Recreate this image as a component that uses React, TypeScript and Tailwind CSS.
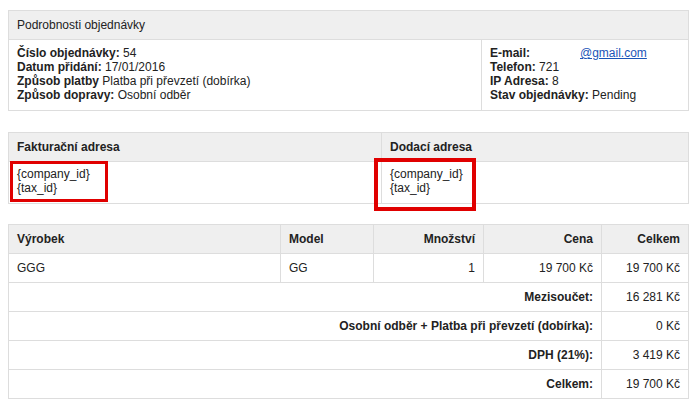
export default function App() {
  const th = "border border-[#dddddd] bg-[#efefef] px-2 h-[29px] font-bold text-[#222222] text-left";
  const td = "border border-[#dddddd] px-2 h-[29px] text-[#222222]";

  return (
    <div className="bg-white w-[699px] h-[409px] pl-[8px] pt-[10px] font-['Liberation_Sans',Arial,sans-serif] text-[12px] leading-[14px] text-[#222222]">
      {/* Order details */}
      <table className="w-[681px] table-fixed border-collapse">
        <colgroup>
          <col className="w-[473px]" />
          <col />
        </colgroup>
        <thead>
          <tr>
            <td colSpan={2} className="border border-[#dddddd] bg-[#efefef] px-2 h-[29px]">
              Podrobnosti objednávky
            </td>
          </tr>
        </thead>
        <tbody>
          <tr>
            <td className="border border-[#dddddd] px-2 pt-[6px] pb-[8px] align-top">
              <div><b>Číslo objednávky:</b> 54</div>
              <div><b>Datum přidání:</b> 17/01/2016</div>
              <div><b>Způsob platby</b> Platba při převzetí (dobírka)</div>
              <div><b>Způsob dopravy:</b> Osobní odběr</div>
            </td>
            <td className="border border-[#dddddd] px-2 pt-[6px] pb-[8px] align-top">
              <div className="flex">
                <b className="w-[90px]">E-mail:</b>
                <span className="text-[#1a55b8] underline">@gmail.com</span>
              </div>
              <div><b>Telefon:</b> 721</div>
              <div><b>IP Adresa:</b> 8</div>
              <div><b>Stav objednávky:</b> Pending</div>
            </td>
          </tr>
        </tbody>
      </table>

      {/* Addresses */}
      <table className="mt-[21px] w-[681px] table-fixed border-collapse">
        <colgroup>
          <col className="w-[373px]" />
          <col />
        </colgroup>
        <thead>
          <tr>
            <th className={th}>Fakturační adresa</th>
            <th className={th}>Dodací adresa</th>
          </tr>
        </thead>
        <tbody>
          <tr>
            <td className="relative border border-[#dddddd] px-2 pt-[5px] h-[42px] align-top">
              <div>{"{company_id}"}</div>
              <div>{"{tax_id}"}</div>
              <div className="absolute left-[1px] top-[-1px] w-[98px] h-[41px] border-[3px] border-[#e00000]" />
            </td>
            <td className="relative border border-[#dddddd] px-2 pt-[5px] h-[42px] align-top">
              <div>{"{company_id}"}</div>
              <div>{"{tax_id}"}</div>
              <div className="absolute left-[-8px] top-[-4px] w-[102px] h-[53px] border-[4px] border-[#e00000]" />
            </td>
          </tr>
        </tbody>
      </table>

      {/* Products */}
      <table className="mt-[20px] w-[681px] table-fixed border-collapse">
        <colgroup>
          <col className="w-[272px]" />
          <col className="w-[93px]" />
          <col className="w-[110px]" />
          <col className="w-[118px]" />
          <col />
        </colgroup>
        <thead>
          <tr>
            <th className={th}>Výrobek</th>
            <th className={th}>Model</th>
            <th className={`${th} text-right`}>Množství</th>
            <th className={`${th} text-right`}>Cena</th>
            <th className={`${th} text-right`}>Celkem</th>
          </tr>
        </thead>
        <tbody>
          <tr>
            <td className={td}>GGG</td>
            <td className={td}>GG</td>
            <td className={`${td} text-right`}>1</td>
            <td className={`${td} text-right`}>19 700 Kč</td>
            <td className={`${td} text-right`}>19 700 Kč</td>
          </tr>
          {[
            ["Mezisoučet:", "16 281 Kč"],
            ["Osobní odběr + Platba při převzetí (dobírka):", "0 Kč"],
            ["DPH (21%):", "3 419 Kč"],
            ["Celkem:", "19 700 Kč"],
          ].map(([label, value]) => (
            <tr key={label}>
              <td colSpan={4} className={`${td} text-right font-bold`}>
                {label}
              </td>
              <td className={`${td} text-right`}>{value}</td>
            </tr>
          ))}
        </tbody>
      </table>
    </div>
  );
}
